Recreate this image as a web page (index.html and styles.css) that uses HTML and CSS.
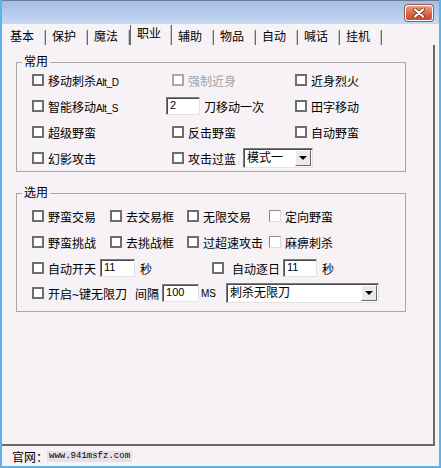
FILE: index.html
```html
<!DOCTYPE html>
<html lang="zh-CN">

<head>
  <meta charset="UTF-8" />
  <title>职业</title>
  <link rel="stylesheet" href="styles.css">
</head>

<body>
  <div class="window">
    <div class="titlebar">
      <div class="close">
        <svg width="14" height="10" viewBox="0 0 14 10">
          <path d="M3 1.5 L11 8.5 M11 1.5 L3 8.5" stroke="#8a3420" stroke-width="4" stroke-linecap="round" />
          <path d="M3 1.5 L11 8.5 M11 1.5 L3 8.5" stroke="#fff" stroke-width="2.2" stroke-linecap="round" />
        </svg>
      </div>
    </div>

    <div class="tabs">
      <div class="tab">基本</div>
      <div class="tab">保护</div>
      <div class="tab">魔法</div>
      <div class="tab active">职业</div>
      <div class="tab">辅助</div>
      <div class="tab">物品</div>
      <div class="tab">自动</div>
      <div class="tab">喊话</div>
      <div class="tab">挂机</div>
    </div>

    <div class="panel">
      <fieldset class="group group-common">
        <legend>常用</legend>
        <div class="grid">
          <div class="item"><span class="cb"></span><span>移动刺杀<span class="latin">Alt_D</span></span></div>
          <div class="item disabled"><span class="cb"></span><span>强制近身</span></div>
          <div class="item"><span class="cb"></span><span>近身烈火</span></div>

          <div class="item"><span class="cb"></span><span>智能移动<span class="latin">Alt_S</span></span></div>
          <div class="item shift"><span class="edit w34">2</span><span>刀移动一次</span></div>
          <div class="item"><span class="cb"></span><span>田字移动</span></div>

          <div class="item"><span class="cb"></span><span>超级野蛮</span></div>
          <div class="item"><span class="cb"></span><span>反击野蛮</span></div>
          <div class="item"><span class="cb"></span><span>自动野蛮</span></div>

          <div class="item"><span class="cb"></span><span>幻影攻击</span></div>
          <div class="item"><span class="cb"></span><span>攻击过蓝</span>
            <div class="combo w70"><span class="combo-text">模式一</span><span class="drop"></span></div>
          </div>
          <div></div>
        </div>
      </fieldset>

      <fieldset class="group group-opt">
        <legend>选用</legend>
        <div class="row">
          <div class="item w78"><span class="cb"></span><span>野蛮交易</span></div>
          <div class="item w77"><span class="cb"></span><span>去交易框</span></div>
          <div class="item w82"><span class="cb"></span><span>无限交易</span></div>
          <div class="item"><span class="cb flat"></span><span>定向野蛮</span></div>
        </div>
        <div class="row">
          <div class="item w78"><span class="cb"></span><span>野蛮挑战</span></div>
          <div class="item w77"><span class="cb"></span><span>去挑战框</span></div>
          <div class="item w82"><span class="cb"></span><span>过超速攻击</span></div>
          <div class="item"><span class="cb flat"></span><span>麻痹刺杀</span></div>
        </div>
        <div class="row">
          <div class="item w180"><span class="cb"></span><span>自动开天</span><span class="edit w35">11</span><span class="unit">秒</span></div>
          <div class="item"><span class="cb"></span><span class="wide-gap">自动逐日</span><span class="edit w34 tight">11</span><span class="unit">秒</span></div>
        </div>
        <div class="row last">
          <div class="item"><span class="cb"></span><span>开启~键无限刀</span><span class="gap-l">间隔</span><span class="edit w37 tight">100</span><span class="latin ms">MS</span>
            <div class="combo w153"><span class="combo-text">刺杀无限刀</span><span class="drop"></span></div>
          </div>
        </div>
      </fieldset>
    </div>

    <div class="status">
      <span>官网：</span><span class="url">www.941msfz.com</span>
    </div>
  </div>
</body>

</html>
```

FILE: styles.css
```css
* {
  box-sizing: border-box;
}

body {
  margin: 0;
  font-family: "Liberation Sans", "Noto Sans CJK SC", sans-serif;
  font-size: 12px;
  color: #000;
  background-color: #f6f2f6;
}

.window {
  width: 441px;
  height: 468px;
  display: flex;
  flex-direction: column;
  border-style: solid;
  border-width: 0 2px 2px 2px;
  border-color: #5cb3ea;
  background-color: #f6f2f6;
}

/* title bar */
.titlebar {
  height: 24px;
  flex: none;
  display: flex;
  justify-content: flex-end;
  align-items: flex-start;
  padding: 4px 6px 0 0;
  border-top: 1px solid #6d7c94;
  background: linear-gradient(#a2bee6, #c7d8f1);
}

.close {
  width: 28px;
  height: 16px;
  display: flex;
  align-items: center;
  justify-content: center;
  border: 1px solid #fff;
  border-radius: 3px;
  box-shadow: 0 0 0 1px #9a5a4a;
  background: linear-gradient(#eba086, #d5654a 55%, #c44c2f);
}

/* tabs */
.tabs {
  height: 21px;
  flex: none;
  display: flex;
  align-items: flex-end;
  padding-left: 2px;
}

.tab {
  width: 42px;
  height: 15px;
  padding-left: 6px;
  line-height: 14px;
  border-right: 1px solid #6b6b6b;
  box-shadow: inset -1px 0 #c8c8c8;
}

.tab.active {
  height: 20px;
  padding-top: 2px;
  border-left: 1px solid #6b6b6b;
  padding-left: 6px;
}

/* page */
.panel {
  height: 401px;
  flex: none;
  margin-right: 4px;
  padding: 12px 0 0 14px;
  border-right: 2px solid #6b6b6b;
  border-bottom: 2px solid #6b6b6b;
}

.group {
  width: 390px;
  margin: 0;
  padding: 0 0 0 15px;
  border: 1px solid #a8a8a8;
}

.group legend {
  line-height: 10px;
  padding: 0 2px;
  margin-left: -10px;
}

.group-common .grid {
  display: grid;
  grid-template-columns: 140px 123px 1fr;
  grid-auto-rows: 26px;
  align-items: center;
}

.group-opt {
  margin-top: 16px;
  padding-top: 5px;
  padding-bottom: 6px;
}

.row {
  height: 26px;
  display: flex;
  align-items: center;
}

.row.last {
  height: 24px;
}

.item {
  display: flex;
  align-items: center;
  gap: 4px;
  white-space: nowrap;
}

.item.disabled {
  color: #a3a3a3;
}

.item.disabled .cb {
  border-color: #a8a8a8;
}

.item.shift {
  margin-left: -6px;
}

.w78 { width: 78px; }
.w77 { width: 77px; }
.w82 { width: 82px; }
.w180 { width: 180px; }

.cb {
  width: 12px;
  height: 12px;
  flex: none;
  border: 2px solid #6e6e6e;
  background-color: #fff;
}

.cb.flat {
  border-width: 1px;
  border-color: #8c8c8c #dcdcdc #dcdcdc #8c8c8c;
}

.latin {
  font-size: 10px;
  letter-spacing: -0.4px;
}

.ms {
  margin-left: -2px;
  font-size: 10px;
  letter-spacing: 0;
}

.wide-gap {
  margin-left: 4px;
}

.gap-l {
  margin-left: 4px;
}

.unit {
  margin-left: 1px;
}

.tight {
  margin-left: -1px;
}

/* edit boxes */
.edit {
  height: 18px;
  flex: none;
  padding-left: 3px;
  line-height: 15px;
  font-size: 11px;
  background-color: #fff;
  border: 1px solid;
  border-color: #7c7c7c #e2e2e2 #e2e2e2 #7c7c7c;
  box-shadow: inset 1px 1px #4a4a4a;
}

.w34 { width: 34px; }
.w35 { width: 35px; }
.w37 { width: 37px; }

/* combo boxes */
.combo {
  height: 20px;
  flex: none;
  display: flex;
  align-items: center;
  margin-left: 3px;
  padding: 1px;
  background-color: #fff;
  border: 1px solid;
  border-color: #7c7c7c #e2e2e2 #e2e2e2 #7c7c7c;
  box-shadow: inset 1px 1px #4a4a4a;
}

.w70 { width: 70px; }
.w153 { width: 153px; margin-left: 6px; }

.combo-text {
  flex: 1;
  padding-left: 2px;
  line-height: 16px;
}

.drop {
  width: 16px;
  height: 16px;
  flex: none;
  display: flex;
  align-items: center;
  justify-content: center;
  background-color: #ece9e8;
  border: 1px solid;
  border-color: #fff #6a6a6a #6a6a6a #fff;
}

.drop::after {
  content: "";
  border-left: 4px solid transparent;
  border-right: 4px solid transparent;
  border-top: 4px solid #000;
}

/* status bar */
.status {
  flex: 1;
  display: flex;
  align-items: center;
  padding-left: 10px;
}

.url {
  margin-left: -1px;
  padding: 0 2px;
  line-height: 11px;
  font-family: "Liberation Mono", monospace;
  font-size: 9px;
  background-color: #e4e0e4;
}
```
